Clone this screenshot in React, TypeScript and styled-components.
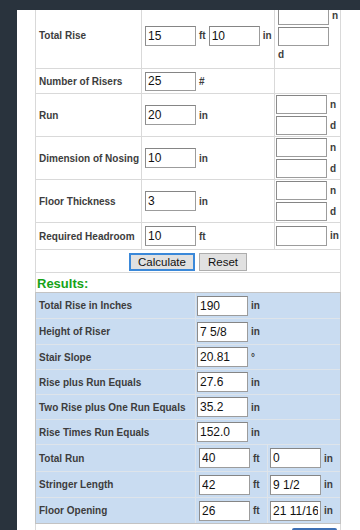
import React from 'react';
import styled, { createGlobalStyle } from 'styled-components';

const DARK = '#29333d';
const LINE = '#d9d9d9';
const TEXT = '#3d3d3d';

const GlobalStyle = createGlobalStyle`
  html, body {
    margin: 0;
    padding: 0;
    overflow: hidden;
    background: ${DARK};
  }
  body {
    font-family: 'Liberation Sans', Arial, sans-serif;
  }
`;

const TopBar = styled.div`
  position: fixed;
  top: 0;
  left: 0;
  right: 0;
  height: 10px;
  background: ${DARK};
  z-index: 5;
`;

const Page = styled.div`
  margin-left: 17px;
  padding: 3px 0 0 18px;
  min-height: 560px;
  background: #fff;
`;

const Sheet = styled.div`
  width: 306px;
`;

const FormGrid = styled.div`
  display: grid;
  grid-template-columns: 105px 132px 65px;
  grid-template-rows: 65px 24px 42px 42px 42px 26px 22px 19px;
  gap: 1px;
  padding: 0 1px;
  background: ${LINE};
`;

const Cell = styled.div`
  display: flex;
  align-items: center;
  background: #fff;
  font-size: 10px;
  font-weight: bold;
  color: ${TEXT};
  white-space: nowrap;
`;

const LabelCell = styled(Cell)`
  padding-left: 3px;
`;

const InputCell = styled(Cell)`
  padding-left: 3px;
`;

const FracCell = styled(Cell)<{ $lead?: number }>`
  flex-direction: column;
  align-items: flex-start;
  justify-content: ${p => (p.$lead ? 'flex-start' : 'center')};
  gap: 2px;
  padding: ${p => p.$lead ?? 0}px 0 0 ${p => (p.$lead ? 3 : 1)}px;
`;

const ActionCell = styled(Cell)`
  grid-column: 1 / -1;
  justify-content: center;
  gap: 4px;
`;

const HeadingCell = styled(Cell)`
  grid-column: 1 / -1;
  padding: 2px 0 0 1px;
  font-size: 13px;
  color: #17a317;
`;

const Field = styled.div`
  display: flex;
  align-items: center;
  gap: 3px;
`;

const Unit = styled.span<{ $gap?: number }>`
  line-height: 12px;
  margin-top: ${p => p.$gap ?? 0}px;
`;

const NumberBox = styled.input<{ $h?: number }>`
  box-sizing: border-box;
  width: 51px;
  height: ${p => p.$h ?? 20}px;
  margin: 0;
  padding: 0 2px;
  border: 1px solid #9c9c9c;
  border-top-color: #858585;
  border-left-color: #8c8c8c;
  font-family: 'Liberation Sans', Arial, sans-serif;
  font-size: 12px;
  font-weight: normal;
  color: #111;
  background: #fff;
  outline: none;
`;

const ActionButton = styled.button<{ $focused?: boolean }>`
  box-sizing: border-box;
  height: 18px;
  margin: 2px 0 0;
  padding: 0 ${p => (p.$focused ? 7 : 8)}px;
  font-family: 'Liberation Sans', Arial, sans-serif;
  font-size: 11.5px;
  color: #111;
  background: #e1e1e1;
  border: ${p => (p.$focused ? '2px solid #3a88d9' : '1px solid #adadad')};
  border-radius: 0;
`;

const ResultsGrid = styled.div`
  display: grid;
  grid-template-columns: 159px 71px 72px;
  grid-template-rows: 25px 25px 24px 24px 24px 24px 26px 25px 25px;
  gap: 1px;
  border: 1px solid #c3c3c3;
  background: #dee4ea;
`;

const ResultCell = styled(Cell)<{ $span?: boolean; $pad?: number }>`
  background: #c9dcf1;
  padding-left: ${p => p.$pad ?? 3}px;
  grid-column: ${p => (p.$span ? 'span 2' : 'auto')};
`;

const Footer = styled.div`
  display: flex;
  justify-content: flex-end;
  padding: 4px 3px 0 0;
  border-left: 1px solid ${LINE};
  border-right: 1px solid ${LINE};
  background: #fff;
`;

const FooterButton = styled.button`
  width: 45px;
  height: 22px;
  padding: 0;
  border: none;
  border-radius: 2px 2px 0 0;
  background: #3d6fb4;
`;

type FracRow = { label: string; value: string };

const fracRows: FracRow[] = [
  { label: 'Run', value: '20' },
  { label: 'Dimension of Nosing', value: '10' },
  { label: 'Floor Thickness', value: '3' },
];

type Result = { label: string; value: string; unit: string; inches?: string };

const results: Result[] = [
  { label: 'Total Rise in Inches', value: '190', unit: 'in' },
  { label: 'Height of Riser', value: '7 5/8', unit: 'in' },
  { label: 'Stair Slope', value: '20.81', unit: '\u00b0' },
  { label: 'Rise plus Run Equals', value: '27.6', unit: 'in' },
  { label: 'Two Rise plus One Run Equals', value: '35.2', unit: 'in' },
  { label: 'Rise Times Run Equals', value: '152.0', unit: 'in' },
  { label: 'Total Run', value: '40', unit: 'ft', inches: '0' },
  { label: 'Stringer Length', value: '42', unit: 'ft', inches: '9 1/2' },
  { label: 'Floor Opening', value: '26', unit: 'ft', inches: '21 11/16' },
];

const App = () => {
  return (
    <>
      <GlobalStyle />
      <TopBar />
      <Page>
        <Sheet>
          <FormGrid>
            <LabelCell>Total Rise</LabelCell>
            <InputCell>
              <Field>
                <NumberBox defaultValue="15" />
                <span>ft</span>
                <NumberBox defaultValue="10" />
                <span>in</span>
              </Field>
            </InputCell>
            <FracCell $lead={3}>
              <Field>
                <NumberBox $h={19} />
                <Unit>n</Unit>
              </Field>
              <NumberBox $h={19} />
              <Unit $gap={1}>d</Unit>
            </FracCell>

            <LabelCell>Number of Risers</LabelCell>
            <InputCell>
              <Field>
                <NumberBox $h={19} defaultValue="25" />
                <span>#</span>
              </Field>
            </InputCell>
            <Cell />

            {fracRows.map(row => (
              <React.Fragment key={row.label}>
                <LabelCell>{row.label}</LabelCell>
                <InputCell>
                  <Field>
                    <NumberBox defaultValue={row.value} />
                    <span>in</span>
                  </Field>
                </InputCell>
                <FracCell>
                  <Field>
                    <NumberBox $h={19} />
                    <Unit>n</Unit>
                  </Field>
                  <Field>
                    <NumberBox $h={19} />
                    <Unit>d</Unit>
                  </Field>
                </FracCell>
              </React.Fragment>
            ))}

            <LabelCell>Required Headroom</LabelCell>
            <InputCell>
              <Field>
                <NumberBox defaultValue="10" />
                <span>ft</span>
              </Field>
            </InputCell>
            <FracCell>
              <Field>
                <NumberBox />
                <Unit>in</Unit>
              </Field>
            </FracCell>

            <ActionCell>
              <ActionButton $focused>Calculate</ActionButton>
              <ActionButton>Reset</ActionButton>
            </ActionCell>

            <HeadingCell>Results:</HeadingCell>
          </FormGrid>

          <ResultsGrid>
            {results.map(r => (
              <React.Fragment key={r.label}>
                <ResultCell>{r.label}</ResultCell>
                {r.inches === undefined ? (
                  <ResultCell $span $pad={1}>
                    <Field>
                      <NumberBox readOnly defaultValue={r.value} />
                      <span>{r.unit}</span>
                    </Field>
                  </ResultCell>
                ) : (
                  <>
                    <ResultCell $pad={3}>
                      <Field>
                        <NumberBox readOnly defaultValue={r.value} />
                        <span>{r.unit}</span>
                      </Field>
                    </ResultCell>
                    <ResultCell $pad={2}>
                      <Field>
                        <NumberBox readOnly defaultValue={r.inches} />
                        <span>in</span>
                      </Field>
                    </ResultCell>
                  </>
                )}
              </React.Fragment>
            ))}
          </ResultsGrid>

          <Footer>
            <FooterButton aria-label="Print" />
          </Footer>
        </Sheet>
      </Page>
    </>
  );
};

export default App;
